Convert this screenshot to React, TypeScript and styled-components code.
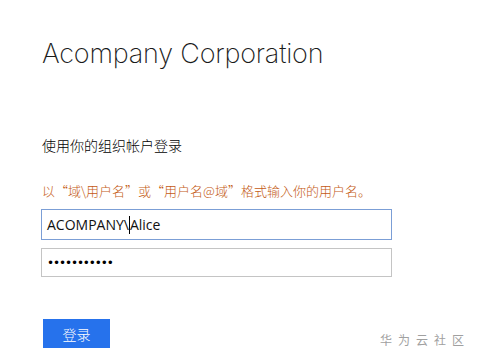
import React from "react";
import styled, { createGlobalStyle } from "styled-components";

const Global = createGlobalStyle`
  html, body { margin: 0; padding: 0; background: #ffffff; }
  body { width: 479px; height: 363px; overflow: hidden; }
`;

const Page = styled.div`
  position: relative;
  width: 479px;
  height: 363px;
  box-sizing: border-box;
  padding: 36px 0 0 41px;
  display: flex;
  flex-direction: column;
  font-family: "Noto Sans CJK SC", "Noto Sans", sans-serif;
  color: #000;
`;

const Title = styled.h1`
  margin: 0 0 0 1px;
  font-family: Inter, "Open Sans", sans-serif;
  font-weight: 200;
  font-size: 27px;
  line-height: 36px;
  color: #1a1a1a;
  letter-spacing: -0.2px;
`;

const Subtitle = styled.div`
  margin: 63px 0 0 1px;
  font-size: 14px;
  font-weight: 300;
  line-height: 20px;
  color: #000;
`;

const Hint = styled.div`
  margin: 26px 0 0 1px;
  font-size: 13px;
  font-weight: 300;
  line-height: 20px;
  color: #c45a14;
`;

const Field = styled.div<{ $focused?: boolean; $h: number }>`
  margin-top: 8px;
  width: 351px;
  height: ${(p) => p.$h}px;
  box-sizing: border-box;
  border: 1px solid ${(p) => (p.$focused ? "#7b9ed6" : "#c4c4c4")};
  display: flex;
  align-items: center;
  padding-left: 5px;
  font-family: "Open Sans", "Noto Sans", sans-serif;
  font-size: 14px;
  color: #111;
`;

const Caret = styled.span`
  display: inline-block;
  width: 1px;
  height: 18px;
  background: #000;
`;

const Dots = styled.span`
  font-size: 12px;
  letter-spacing: -1.1px;
  font-family: "DejaVu Sans", sans-serif;
  color: #000;
`;

const Button = styled.button`
  margin: 42px 0 0 2px;
  width: 67px;
  height: 29px;
  border: none;
  background: #2672ec;
  color: #fff;
  font-family: "Noto Sans CJK SC", sans-serif;
  font-size: 14px;
  font-weight: 300;
  padding: 0;
`;

const Watermark = styled.div`
  position: absolute;
  right: 9px;
  bottom: 15px;
  font-size: 12px;
  color: #a0a0a0;
  letter-spacing: 6px;
`;

export default function App() {
  return (
    <>
      <Global />
      <Page>
        <Title>Acompany Corporation</Title>
        <Subtitle>使用你的组织帐户登录</Subtitle>
        <Hint>以“域\用户名”或“用户名@域”格式输入你的用户名。</Hint>
        <Field $focused $h={31}>
          ACOMPANY\<Caret />Alice
        </Field>
        <Field $h={29}>
          <Dots>•••••••••••</Dots>
        </Field>
        <Button>登录</Button>
        <Watermark>华为云社区</Watermark>
      </Page>
    </>
  );
}
